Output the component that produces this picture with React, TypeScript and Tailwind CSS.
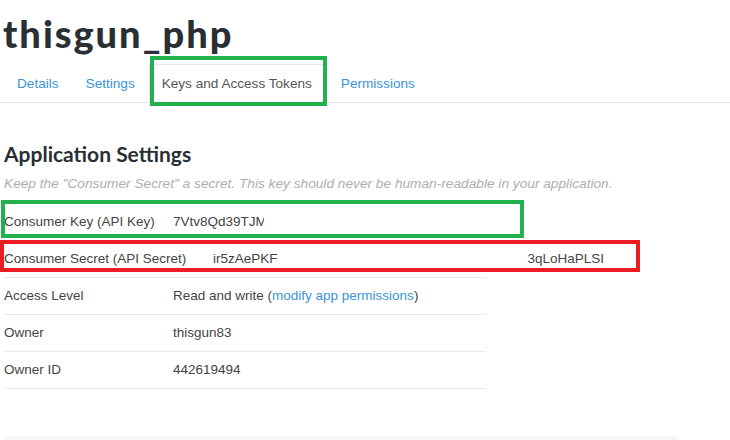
import React from "react";

const Row = ({ label, children, labelW = "w-[169px]" }: { label: string; children: React.ReactNode; labelW?: string }) => (
  <div className="flex items-center h-[37px] border-b border-[#e8ecee]">
    <div className={`${labelW} shrink-0`}>{label}</div>
    <div className="whitespace-nowrap">{children}</div>
  </div>
);

export default function App() {
  return (
    <div className="relative w-[730px] h-[440px] overflow-hidden bg-white text-[#444] font-['Liberation_Sans',Arial,sans-serif]">
      <h1 className="pl-[3px] pt-[10px] h-[56px] text-[38px] leading-[46px] font-black text-[#292f33] font-['Lato',sans-serif] tracking-[2px]">
        thisgun_php
      </h1>
      <nav className="mt-[8px] flex gap-[1px] border-b border-[#e1e8ed] pl-[4px] text-[13.6px] leading-[20px]">
        {["Details", "Settings", "Keys and Access Tokens", "Permissions"].map((t, i) => (
          <div
            key={t}
            className={
              i === 2
                ? "px-[12px] pt-[9px] pb-[7px] mr-[2px] -mb-px border border-[#e1e8ed] border-b-white bg-white text-[#555]"
                : "px-[12px] pt-[9px] pb-[7px] border border-transparent text-[#3b94d9]"
            }
          >
            {t}
          </div>
        ))}
      </nav>

      <section className="pl-[4px] pt-[38px]">
        <h2 className="text-[21px] leading-[26px] font-bold text-[#292f33] font-['Lato',sans-serif]">
          Application Settings
        </h2>
        <p className="mt-[7px] text-[13.7px] leading-[20px] italic text-[#a9afb4]">
          Keep the "Consumer Secret" a secret. This key should never be human-readable in your application.
        </p>
        <div className="mt-[10px] w-[482px] text-[13.5px] leading-[20px]">
          <Row label="Consumer Key (API Key)">7Vtv8Qd39TJM</Row>
          <Row label="Consumer Secret (API Secret)" labelW="w-[209px]">
            <span>ir5zAePKF</span>
            <span className="inline-block w-[250px]" />
            <span>3qLoHaPLSI</span>
          </Row>
          <Row label="Access Level">
            Read and write (<span className="text-[#3b94d9]">modify app permissions</span>)
          </Row>
          <Row label="Owner">thisgun83</Row>
          <Row label="Owner ID">442619494</Row>
        </div>
      </section>

      <div className="absolute left-[4px] bottom-0 w-[675px] h-[4px] rounded-tr-[4px] bg-[#f5f6f7]" />

      {/* redaction smudges */}
      <div className="absolute left-[264px] top-[207px] w-[118px] h-[30px] bg-white rounded-[10px]" />
      <div className="absolute left-[262px] top-[232px] w-[128px] h-[10px] bg-white rounded-full" />
      <div className="absolute left-[272px] top-[236px] w-[253px] h-[12px] bg-white rounded-full" />
      <div className="absolute left-[268px] top-[264px] w-[223px] h-[10px] bg-white rounded-full" />
      <div className="absolute left-[300px] top-[268px] w-[90px] h-[2px] bg-[#f3a0a3]" />

      {/* annotation boxes */}
      <div className="absolute left-[150px] top-[56px] w-[177px] h-[50px] border-[4px] border-[#22b14c]" />
      <div className="absolute left-[1px] top-[200px] w-[523px] h-[38px] border-[4px] border-[#22b14c]" />
      <div className="absolute left-0 top-[240px] w-[640px] h-[32px] border-[4px] border-[#ed1c24]" />
    </div>
  );
}
